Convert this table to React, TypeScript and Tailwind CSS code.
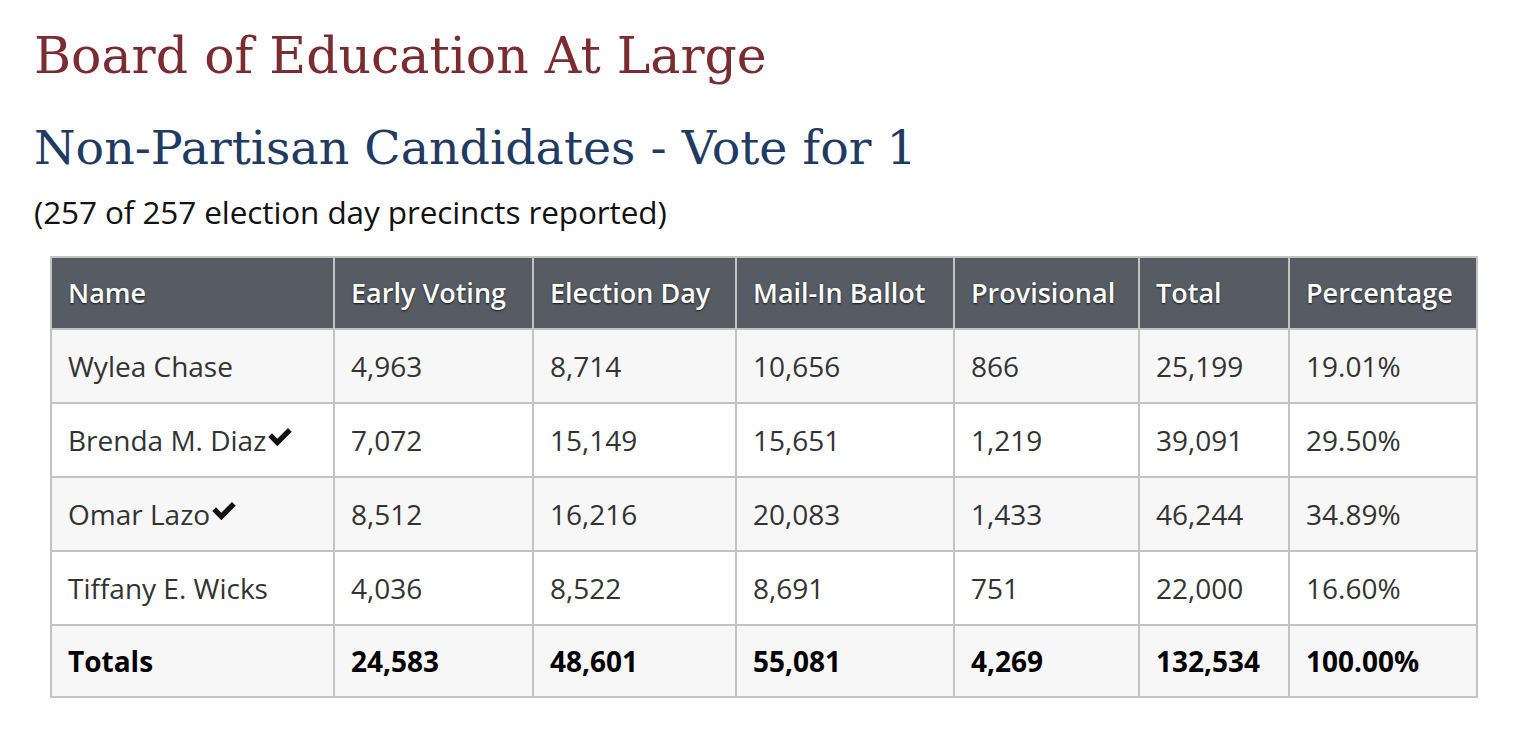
const rows = [
  { name: "Wylea Chase", winner: false, values: ["4,963", "8,714", "10,656", "866", "25,199", "19.01%"] },
  { name: "Brenda M. Diaz", winner: true, values: ["7,072", "15,149", "15,651", "1,219", "39,091", "29.50%"] },
  { name: "Omar Lazo", winner: true, values: ["8,512", "16,216", "20,083", "1,433", "46,244", "34.89%"] },
  { name: "Tiffany E. Wicks", winner: false, values: ["4,036", "8,522", "8,691", "751", "22,000", "16.60%"] },
];

const totals = ["24,583", "48,601", "55,081", "4,269", "132,534", "100.00%"];

const headers = ["Name", "Early Voting", "Election Day", "Mail-In Ballot", "Provisional", "Total", "Percentage"];
const widths = ["w-[283px]", "w-[199px]", "w-[203px]", "w-[218px]", "w-[185px]", "w-[150px]", "w-[188px]"];

function Check() {
  return (
    <svg viewBox="0 0 24 24" className="inline-block w-[32px] h-[32px] -ml-[2px] align-[-1px]" fill="#111">
      <path d="M3.2 12.8 l2.8-2.8 l4 4 l8-8 l2.8 2.8 l-10.8 10.8z" />
    </svg>
  );
}

export default function App() {
  return (
    <div className="min-h-screen bg-white pl-[34px] pt-[20px] font-['Open_Sans',sans-serif]">
      <h1 className="font-['DejaVu_Serif',serif] text-[50.5px] leading-[72px] text-[#7a2c31]">
        Board of Education At Large
      </h1>
      <h2 className="mt-[24px] font-['DejaVu_Serif',serif] text-[47.5px] leading-[64px] text-[#1f3a63]">
        Non-Partisan Candidates - Vote for 1
      </h2>
      <p className="mt-[12px] text-[31.5px] leading-[40px] tracking-[-0.1px] text-[#111]">
        (257 of 257 election day precincts reported)
      </p>
      <table className="mt-[24px] ml-[16px] table-fixed border-collapse border-2 border-[#c3c3c3] text-[28px]">
        <thead>
          <tr className="bg-[#575c64] h-[72px]">
            {headers.map((h, i) => (
              <th
                key={h}
                className={`${widths[i]} border-2 border-[#c3c3c3] px-[16px] text-left text-[27px] font-semibold text-white [text-shadow:0_1px_2px_rgba(0,0,0,0.75)]`}
              >
                {h}
              </th>
            ))}
          </tr>
        </thead>
        <tbody>
          {rows.map((r, idx) => (
            <tr key={r.name} className={`h-[74px] ${idx % 2 === 0 ? "bg-[#f7f7f7]" : "bg-white"}`}>
              <td className="border-2 border-[#c3c3c3] px-[16px] text-[#333]">
                {r.name}
                {r.winner && <Check />}
              </td>
              {r.values.map((v, i) => (
                <td key={i} className="border-2 border-[#c3c3c3] px-[16px] text-[#333]">
                  {v}
                </td>
              ))}
            </tr>
          ))}
          <tr className="h-[72px] bg-[#f7f7f7]">
            <td className="border-2 border-[#c3c3c3] px-[16px] font-bold text-black">Totals</td>
            {totals.map((v, i) => (
              <td key={i} className="border-2 border-[#c3c3c3] px-[16px] font-bold text-black">
                {v}
              </td>
            ))}
          </tr>
        </tbody>
      </table>
    </div>
  );
}
